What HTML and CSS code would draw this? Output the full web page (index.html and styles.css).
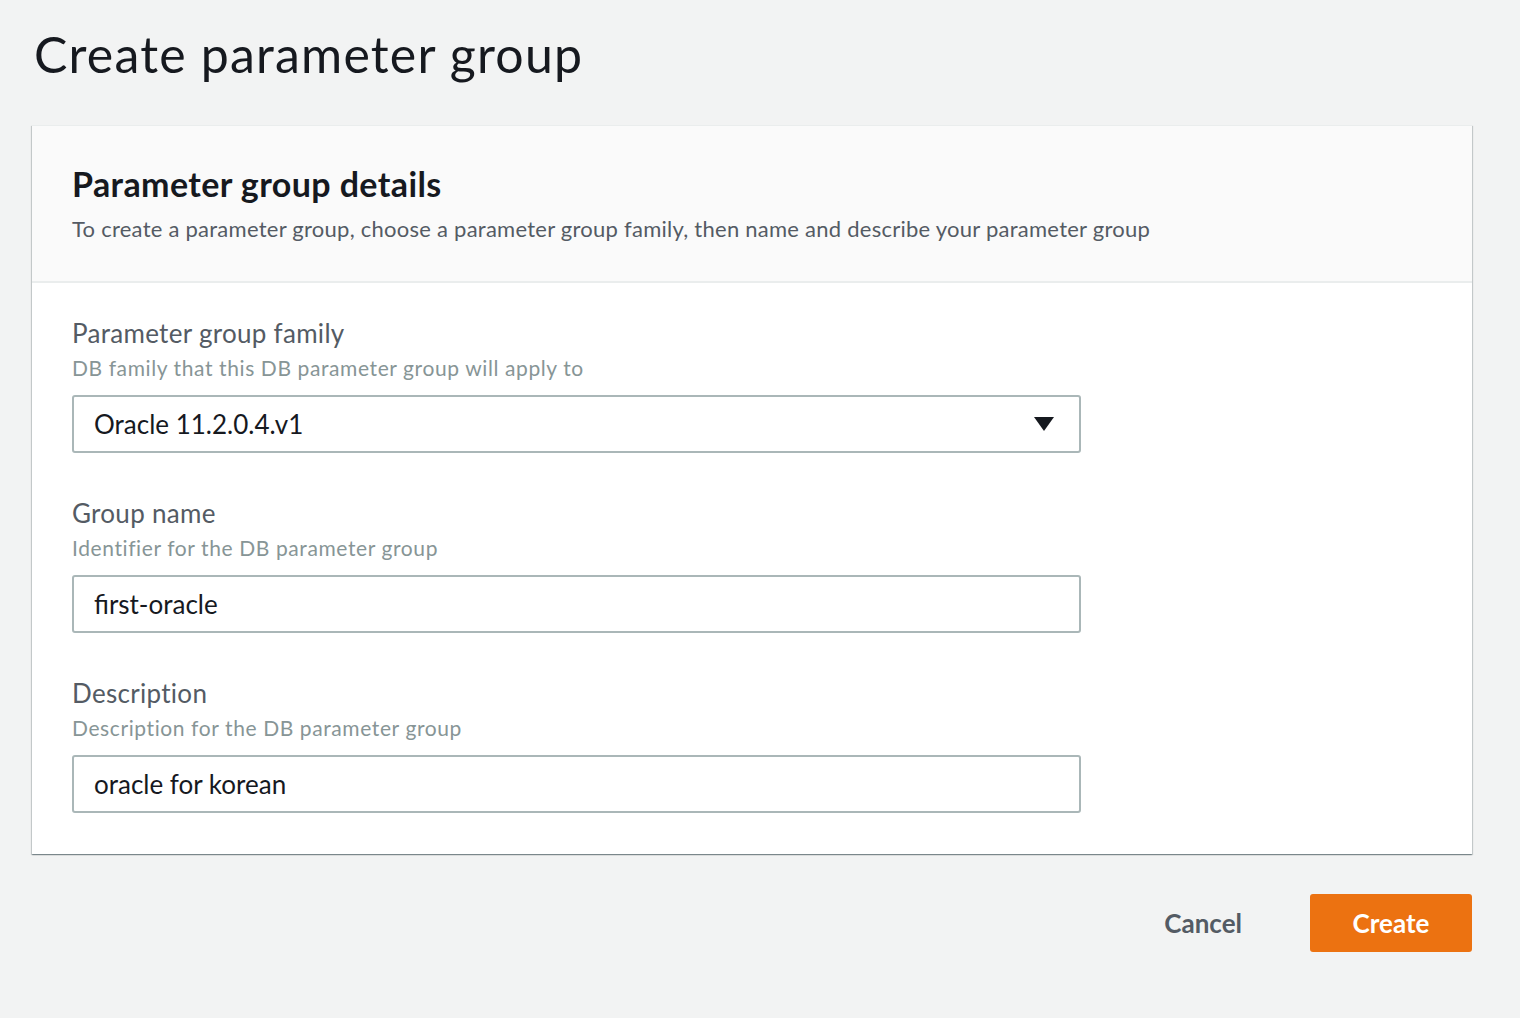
FILE: index.html
```html
<!DOCTYPE html>
<html>
<head>
<meta charset="utf-8">
<link rel="stylesheet" href="styles.css">
</head>
<body>
<div class="page">
  <h1 class="title">Create parameter group</h1>
  <div class="card">
    <div class="card-header">
      <h2 class="card-title">Parameter group details</h2>
      <p class="card-desc">To create a parameter group, choose a parameter group family, then name and describe your parameter group</p>
    </div>
    <div class="card-body">
      <div class="field">
        <div class="label">Parameter group family</div>
        <div class="hint">DB family that this DB parameter group will apply to</div>
        <div class="control select">
          <span class="value">Oracle 11.2.0.4.v1</span>
          <svg class="caret" width="20" height="14" viewBox="0 0 20 14"><path d="M0 0 H20 L10 14 Z" fill="#16191f"/></svg>
        </div>
      </div>
      <div class="field">
        <div class="label">Group name</div>
        <div class="hint">Identifier for the DB parameter group</div>
        <div class="control"><span class="value">first-oracle</span></div>
      </div>
      <div class="field">
        <div class="label">Description</div>
        <div class="hint">Description for the DB parameter group</div>
        <div class="control"><span class="value">oracle for korean</span></div>
      </div>
    </div>
  </div>
  <div class="actions">
    <button class="btn-link">Cancel</button>
    <button class="btn-primary">Create</button>
  </div>
</div>
</body>
</html>
```

FILE: styles.css
```css
html, body {
  margin: 0;
  padding: 0;
  background: #f2f3f3;
  font-family: Lato, "Open Sans", sans-serif;
  color: #16191f;
}
.page {
  padding: 22px 48px 0 32px;
}
.title {
  margin: 0 0 0 2px;
  font-weight: 400;
  font-size: 50px;
  line-height: 64px;
  letter-spacing: 1.2px;
  color: #16191f;
}
.card {
  margin-top: 39px;
  background: #fff;
  border-top: 1px solid #eaeded;
  box-shadow: 0 1px 1px 0 rgba(0,28,36,0.3), 1px 1px 1px 0 rgba(0,28,36,0.15), -1px 1px 1px 0 rgba(0,28,36,0.15);
}
.card-header {
  background: #fafafa;
  border-bottom: 2px solid #eaeded;
  padding: 36px 40px 37px 40px;
}
.card-title {
  margin: 0;
  font-size: 34px;
  font-weight: 700;
  line-height: 44px;
  letter-spacing: 0.4px;
}
.card-desc {
  margin: 8px 0 0 0;
  font-size: 22px;
  line-height: 30px;
  letter-spacing: 0.25px;
  color: #545b64;
}
.card-body {
  padding: 33px 40px 41px 40px;
  display: flex;
  flex-direction: column;
  gap: 43px;
}
.field {
  display: flex;
  flex-direction: column;
}
.label {
  font-size: 26px;
  line-height: 34px;
  letter-spacing: 0.3px;
  color: #545b64;
}
.hint {
  font-size: 21px;
  line-height: 30px;
  letter-spacing: 0.6px;
  color: #879596;
  margin-top: 3px;
  margin-bottom: 12px;
}
.control {
  width: 1009px;
  height: 58px;
  box-sizing: border-box;
  border: 2px solid #aab7b8;
  border-radius: 3px;
  background: #fff;
  display: flex;
  align-items: center;
  padding: 0 25px 0 20px;
}
.value {
  font-size: 26px;
  color: #16191f;
  flex: 1;
}
.caret {
  display: block;
}
.actions {
  display: flex;
  justify-content: flex-end;
  align-items: center;
  margin-top: 40px;
  gap: 68px;
}
.btn-link {
  background: none;
  border: none;
  font-family: inherit;
  font-weight: 700;
  font-size: 26px;
  color: #545b64;
  padding: 0;
}
.btn-primary {
  width: 162px;
  height: 58px;
  background: #ec7211;
  border: none;
  border-radius: 3px;
  color: #fff;
  font-family: inherit;
  font-weight: 700;
  font-size: 26px;
}
```
